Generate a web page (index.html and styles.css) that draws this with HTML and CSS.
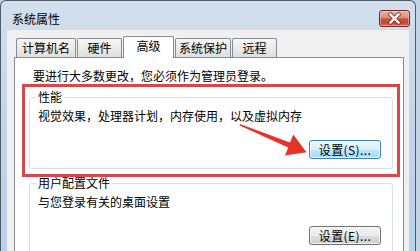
FILE: index.html
```html
<!DOCTYPE html>
<html lang="zh-CN">
<head>
<meta charset="utf-8">
<title>系统属性</title>
<link rel="stylesheet" href="styles.css">
</head>
<body>
<div class="window">
  <div class="titlebar">
    <span class="title">系统属性</span>
    <button class="close" aria-label="关闭">
      <svg width="29" height="15" viewBox="0 0 29 15">
        <path d="M10.5 3.5 L18.5 11.5 M18.5 3.5 L10.5 11.5" stroke="#6e2a20" stroke-width="4.2" stroke-linecap="square" fill="none" opacity="0.75"/>
        <path d="M10.5 3.5 L18.5 11.5 M18.5 3.5 L10.5 11.5" stroke="#ffffff" stroke-width="2.4" stroke-linecap="square" fill="none"/>
      </svg>
    </button>
  </div>
  <div class="client">
    <div class="tabs">
      <div class="tab">计算机名</div>
      <div class="tab">硬件</div>
      <div class="tab selected">高级</div>
      <div class="tab tight">系统保护</div>
      <div class="tab">远程</div>
    </div>
    <div class="panel">
      <p class="intro">要进行大多数更改，您必须作为管理员登录。</p>
      <fieldset class="group">
        <legend>性能</legend>
        <p>视觉效果，处理器计划，内存使用，以及虚拟内存</p>
        <div class="actions"><button class="btn btn-hot">设置(S)...</button></div>
      </fieldset>
      <fieldset class="group">
        <legend>用户配置文件</legend>
        <p>与您登录有关的桌面设置</p>
        <div class="actions"><button class="btn">设置(E)...</button></div>
      </fieldset>
    </div>
  </div>
</div>
<svg class="annotation" width="420" height="251" viewBox="0 0 420 251">
  <rect x="23.5" y="85.5" width="375" height="90" fill="none" stroke="#d9474a" stroke-width="3"/>
  <polygon points="240,123.9 290,142.4 293.3,134.6 306.5,152.3 285,155.5 288.2,147.6 239.6,125.6" fill="#e6332a"/>
</svg>
</body>
</html>
```
FILE: styles.css
```css
html, body {
  margin: 0;
  height: 251px;
  overflow: hidden;
}
body {
  position: relative;
  background: #c3d4e7;
  font: 12px/16px "Noto Sans CJK SC", "Noto Sans", sans-serif;
  color: #000;
}
.window {
  width: 416px;
  height: 251px;
  box-sizing: border-box;
  border: 1px solid #4f5b68;
  border-bottom: none;
  border-radius: 6px 6px 0 0;
  background: linear-gradient(#d3dfec, #c2d5e9 50%, #b9d1ea);
  padding: 0 6px;
  display: flex;
  flex-direction: column;
}
.titlebar {
  height: 29px;
  flex: none;
  margin: 0 -6px;
  padding: 0 5px 0 11px;
  display: flex;
  align-items: flex-start;
  justify-content: space-between;
}
.title {
  margin-top: 10px;
}
.close {
  margin-top: 9px;
  width: 31px;
  height: 17px;
  padding: 0;
  box-sizing: border-box;
  border: 1px solid #6d2a22;
  border-radius: 3px;
  background: linear-gradient(#e9b2a4, #db8f7c 45%, #c9533e 52%, #c54a35 80%, #d5705c);
  box-shadow: inset 0 0 0 1px rgba(255, 230, 220, 0.45);
  display: flex;
  align-items: center;
  justify-content: center;
}
.close svg {
  display: block;
}
.client {
  flex: 1;
  min-height: 0;
  background: #f0f0f0;
  padding: 6px 5px 0 7px;
  display: flex;
  flex-direction: column;
}
.tabs {
  flex: none;
  display: flex;
  align-items: flex-end;
  gap: 1px;
  margin-left: 2px;
}
.tab {
  height: 19px;
  box-sizing: border-box;
  min-width: 45px;
  padding: 1px 5px 0;
  border: 1px solid #898c95;
  border-bottom: none;
  border-radius: 2px 2px 0 0;
  text-align: center;
  background: linear-gradient(#f6f6f6, #ebebeb 50%, #dedede);
}
.tab.tight {
  padding: 1px 3px 0;
}
.tab.selected {
  height: 22px;
  min-width: 51px;
  margin-bottom: -1px;
  background: #fff;
  position: relative;
  z-index: 1;
}
.panel {
  flex: 1;
  min-height: 0;
  overflow: hidden;
  background: #fff;
  border: 1px solid #898c95;
  border-bottom: none;
  padding-top: 10px;
}
.intro {
  margin: 0 0 5px 18px;
}
.group {
  margin: 0 10px 0 14px;
  padding: 3px 11px 9px 6px;
  border: 1px solid #d5dfe5;
  border-radius: 3px;
  min-width: 0;
}
.group + .group {
  margin-top: 6px;
}
.group legend {
  padding: 0 2px;
  line-height: 16px;
}
.group p {
  margin: 0 0 0 2px;
}
.actions {
  display: flex;
  justify-content: flex-end;
  margin-top: 16px;
}
.btn {
  width: 72px;
  height: 19px;
  box-sizing: border-box;
  padding: 0;
  font: 12px/17px "Noto Sans CJK SC", "Noto Sans", sans-serif;
  letter-spacing: 0.4px;
  color: #000;
  border: 1px solid #707070;
  border-radius: 3px;
  background: linear-gradient(#f2f2f2, #ebebeb 50%, #dddddd 51%, #cfcfcf);
  box-shadow: inset 0 0 0 1px rgba(255, 255, 255, 0.7);
}
.btn-hot {
  border-color: #3c7fb1;
  background: linear-gradient(#eaf6fd, #d9f0fc 50%, #bee6fd 51%, #a7d9f5);
}
.annotation {
  position: absolute;
  left: 0;
  top: 0;
  pointer-events: none;
}
```
